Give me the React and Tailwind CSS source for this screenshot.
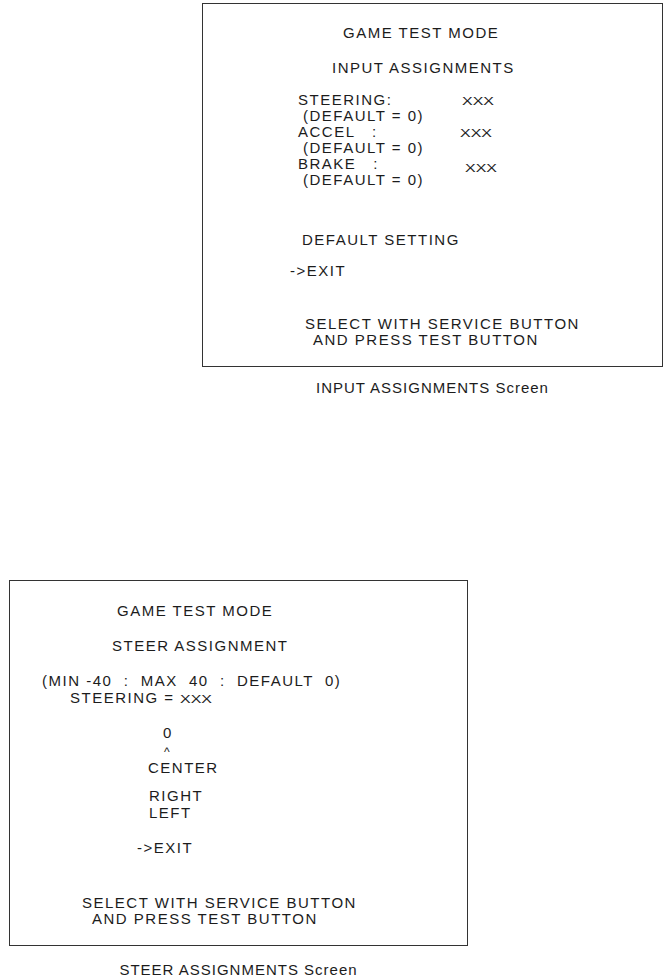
import React from 'react';

// one text row of the test-mode screen; spacing is kept as typed
const Line = ({ className = '', children }) => (
  <div className={`whitespace-pre leading-[16px] ${className}`}>{children}</div>
);

const Xxx = ({ className = '' }) => (
  <span className={`inline-block origin-left scale-x-[1.45] text-[11px] leading-none tracking-normal ${className}`}>XXX</span>
);

const Caption = ({ className = '', children }) => (
  <div className={`text-center whitespace-pre leading-[16px] tracking-[1px] ${className}`}>{children}</div>
);

const InputAssignments = () => (
  <div className="ml-[202px] w-[461px] pt-[3px]">
    <div className="h-[364px] border border-[#333] tracking-[1.5px]">
      <Line className="mt-[21px] ml-[140px]">GAME TEST MODE</Line>
      <Line className="mt-[19px] ml-[129px]">INPUT ASSIGNMENTS</Line>

      <div className="mt-[16px] ml-[95px] leading-[16px]">
        <div className="flex h-[16px] items-baseline whitespace-pre">
          <span className="w-[164px]">STEERING:</span>
          <Xxx />
        </div>
        <div className="pl-[5px] whitespace-pre">(DEFAULT = 0)</div>
        <div className="flex h-[16px] items-baseline whitespace-pre">
          <span className="w-[162px]">ACCEL   :</span>
          <Xxx />
        </div>
        <div className="pl-[5px] whitespace-pre">(DEFAULT = 0)</div>
        <div className="flex h-[16px] items-baseline whitespace-pre">
          <span className="w-[167px]">BRAKE   :</span>
          <Xxx className="translate-y-[3px]" />
        </div>
        <div className="pl-[5px] whitespace-pre">(DEFAULT = 0)</div>
      </div>

      <Line className="mt-[44px] ml-[99px]">DEFAULT SETTING</Line>
      <Line className="mt-[15px] ml-[87px]">-&gt;EXIT</Line>
      <Line className="mt-[37px] ml-[102px]">SELECT WITH SERVICE BUTTON</Line>
      <Line className="ml-[110px]">AND PRESS TEST BUTTON</Line>
    </div>
    <Caption className="mt-[13px]">INPUT ASSIGNMENTS Screen</Caption>
  </div>
);

const SteerAssignment = () => (
  <div className="ml-[9px] w-[459px] mt-[184px]">
    <div className="h-[366px] border border-[#333] tracking-[1.5px]">
      <Line className="mt-[22px] ml-[107px]">GAME TEST MODE</Line>
      <Line className="mt-[19px] ml-[102px]">STEER ASSIGNMENT</Line>
      <Line className="mt-[19px] ml-[32px]">(MIN -40  :  MAX  40  :  DEFAULT  0)</Line>
      <Line className="mt-[1px] ml-[60px] flex h-[16px] items-baseline">
        <span>STEERING = </span>
        <Xxx />
      </Line>
      <Line className="mt-[19px] ml-[153px]">0</Line>
      <div className="mt-[4px] ml-[154px] text-[12px] leading-[15px]">^</div>
      <Line className="ml-[138px]">CENTER</Line>
      <Line className="mt-[12px] ml-[139px]">RIGHT</Line>
      <Line className="mt-[1px] ml-[139px]">LEFT</Line>
      <Line className="mt-[19px] ml-[127px]">-&gt;EXIT</Line>
      <Line className="mt-[39px] ml-[72px]">SELECT WITH SERVICE BUTTON</Line>
      <Line className="ml-[82px]">AND PRESS TEST BUTTON</Line>
    </div>
    <Caption className="mt-[16px]">STEER ASSIGNMENTS Screen</Caption>
  </div>
);

export default function App() {
  return (
    <div className="min-h-[980px] w-[669px] bg-white text-[15px] text-[#1c1c1c] font-['Liberation_Sans',Arial,sans-serif]">
      <InputAssignments />
      <SteerAssignment />
    </div>
  );
}
